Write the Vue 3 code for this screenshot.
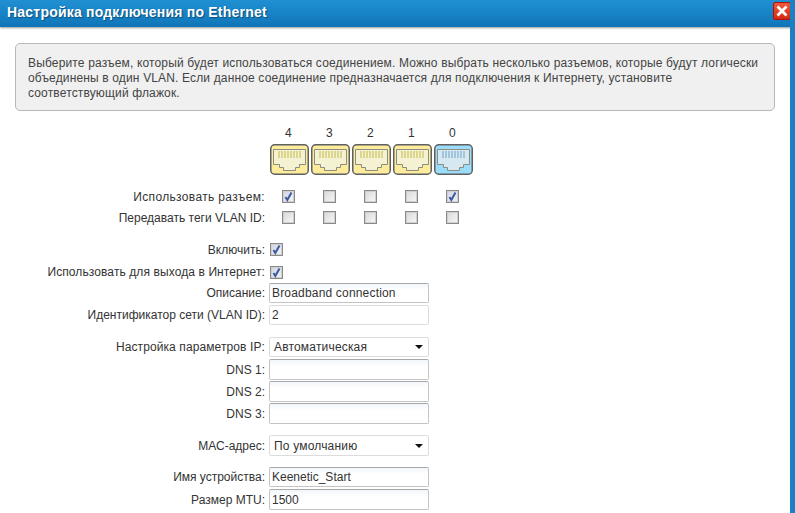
<script setup>
const ports = [
  { n: 4, blue: false, use: true },
  { n: 3, blue: false, use: false },
  { n: 2, blue: false, use: false },
  { n: 1, blue: false, use: false },
  { n: 0, blue: true, use: true },
]
const pins = [0, 1, 2, 3, 4, 5, 6, 7]
</script>

<template>
  <div class="window">
    <header class="title">
      <h1>Настройка подключения по Ethernet</h1>
      <button class="close" aria-label="Закрыть">
        <svg width="16" height="16" viewBox="0 0 16 16"><path d="M3.5 3.5l9 9M12.5 3.5l-9 9" stroke="#fff" stroke-width="2.8" fill="none" /></svg>
      </button>
    </header>
    <main class="body">
      <div class="info">
        Выберите разъем, который будет использоваться соединением. Можно выбрать несколько разъемов, которые будут логически объединены в один VLAN. Если данное соединение предназначается для подключения к Интернету, установите соответствующий флажок.
      </div>

      <div class="grid-row numbers">
        <span></span>
        <div class="cells"><span v-for="p in ports" :key="p.n" class="cell">{{ p.n }}</span></div>
      </div>
      <div class="grid-row jacks">
        <span></span>
        <div class="cells">
          <span v-for="p in ports" :key="p.n" class="cell">
            <svg width="39" height="31" viewBox="0 0 39 31">
              <rect x="0.75" y="0.75" width="37.5" height="29.5" rx="4" :fill="p.blue ? '#9bdcfb' : '#fdec9c'" stroke="#5f5f5f" stroke-width="1.5" />
              <path d="M3.5 5.5h32v15h-6v3h-4v3h-12v-3h-4v-3h-6z" :fill="p.blue ? '#d6e9f2' : '#f5f1d3'" stroke="#8c8c80" />
              <rect v-for="i in pins" :key="i" :x="8 + i * 3" y="7" width="2" height="7" :fill="p.blue ? '#a3c5dc' : '#dcd68c'" />
            </svg>
          </span>
        </div>
      </div>

      <div class="grid-row check-row first">
        <label class="wide">Использовать разъем:</label>
        <div class="cells">
          <span v-for="p in ports" :key="p.n" class="cell"><span class="box" :class="{ on: p.use }"><svg v-if="p.use" width="11" height="11" viewBox="0 0 11 11"><path d="M2.5 6l1.8 3L8.5 1.5" stroke="#3b5a9e" stroke-width="2" fill="none" /></svg></span></span>
        </div>
      </div>
      <div class="grid-row check-row">
        <label>Передавать теги VLAN ID:</label>
        <div class="cells">
          <span v-for="p in ports" :key="p.n" class="cell"><span class="box"></span></span>
        </div>
      </div>

      <div class="grid-row single enable">
        <label>Включить:</label>
        <span class="box on"><svg width="11" height="11" viewBox="0 0 11 11"><path d="M2.5 6l1.8 3L8.5 1.5" stroke="#3b5a9e" stroke-width="2" fill="none" /></svg></span>
      </div>
      <div class="grid-row single internet">
        <label class="semi">Использовать для выхода в Интернет:</label>
        <span class="box on"><svg width="11" height="11" viewBox="0 0 11 11"><path d="M2.5 6l1.8 3L8.5 1.5" stroke="#3b5a9e" stroke-width="2" fill="none" /></svg></span>
      </div>

      <div class="grid-row field desc"><label>Описание:</label><div class="input spaced">Broadband connection</div></div>
      <div class="grid-row field"><label>Идентификатор сети (VLAN ID):</label><div class="input plain">2</div></div>

      <div class="grid-row field ip"><label class="semi">Настройка параметров IP:</label><div class="input select spaced"><span>Автоматическая</span><i class="arrow"></i></div></div>
      <div class="grid-row field"><label>DNS 1:</label><div class="input tall"></div></div>
      <div class="grid-row field close-row"><label>DNS 2:</label><div class="input tall"></div></div>
      <div class="grid-row field close-row"><label>DNS 3:</label><div class="input tall"></div></div>

      <div class="grid-row field group"><label>МАС-адрес:</label><div class="input select tall spaced"><span>По умолчанию</span><i class="arrow"></i></div></div>

      <div class="grid-row field group"><label>Имя устройства:</label><div class="input">Keenetic_Start</div></div>
      <div class="grid-row field"><label>Размер MTU:</label><div class="input tall">1500</div></div>
    </main>
  </div>
</template>

<style scoped>
.window {
  width: 795px;
  height: 513px;
  overflow: hidden;
  box-sizing: border-box;
  background: #fff;
  border-right: 5px solid #1a80c2;
  font-family: "Liberation Sans", Arial, sans-serif;
  font-size: 12px;
  color: #333;
}
.title {
  height: 27px;
  box-sizing: content-box;
  margin-right: -5px;
  display: flex;
  align-items: flex-start;
  justify-content: space-between;
  padding: 0 0 0 7px;
  background: linear-gradient(#2090d2, #0f75b8);
  box-shadow: 0 1px 2px #999;
  position: relative;
}
h1 {
  margin: 3px 0 0;
  font-size: 14px;
  line-height: 18px;
  font-weight: bold;
  letter-spacing: 0.21px;
  color: #fff;
  text-shadow: 1px 1px 1px #0a4e7e;
}
.close {
  width: 18px;
  height: 18px;
  margin: 2px 4px 0 0;
  padding: 0;
  display: flex;
  align-items: center;
  justify-content: center;
  background: linear-gradient(#ee5a3c, #d42a10);
  border: 1px solid #b01010;
  border-radius: 2px;
}
.body { padding-top: 16px; }
.info {
  width: 760px;
  height: 68px;
  box-sizing: border-box;
  margin-left: 15px;
  padding: 12px 12px 0;
  background: #f0f0f0;
  border: 1px solid #b8b8b8;
  border-radius: 5px;
  line-height: 15px;
  letter-spacing: 0.15px;
  color: #444;
}
.grid-row {
  display: grid;
  grid-template-columns: 265px 1fr;
  column-gap: 4px;
  align-items: center;
}
label { text-align: right; color: #333; white-space: nowrap; }
label.wide { letter-spacing: 0.35px; }
label.semi { letter-spacing: 0.1px; }
.cells { display: flex; margin-left: 1px; }
.cell {
  width: 41px;
  flex: none;
  display: flex;
  justify-content: flex-start;
}
.numbers { margin-top: 15px; height: 13px; }
.numbers .cell { padding-left: 15px; box-sizing: border-box; }
.jacks { margin-top: 5px; height: 31px; }
.jacks svg { display: block; }
.check-row { height: 21px; }
.check-row .cell { padding-left: 12px; box-sizing: border-box; }
.check-row.first { margin-top: 11px; }
.box {
  width: 13px;
  height: 13px;
  box-sizing: border-box;
  display: flex;
  align-items: center;
  justify-content: center;
  border: 1px solid #8a8a8a;
  box-shadow: inset 0 0 0 1px #cfcfcf;
  background: linear-gradient(135deg, #d8d8d8, #f8f8f8);
}
.box.on { background: linear-gradient(135deg, #d0d3e4, #f4f4f8); }
.single { justify-items: start; }
.single label { justify-self: end; }
.single .box { margin-left: 1px; }
.enable { margin-top: 10px; height: 23px; }
.internet { height: 22px; }
.field { margin-top: 2px; }
.field.desc { margin-top: 0; }
.field.ip { margin-top: 12px; }
.field.close-row { margin-top: 1px; }
.field.group { margin-top: 11px; }
.input {
  width: 160px;
  height: 20px;
  box-sizing: border-box;
  padding-left: 2px;
  display: flex;
  align-items: center;
  justify-content: space-between;
  background: linear-gradient(#f2f6fa, #fff 35%);
  border: 1px solid #c4c4c4;
  border-top-color: #a8a8a8;
  border-radius: 2px;
  color: #333;
}
.input.spaced { letter-spacing: 0.18px; }
.input.plain { border-color: #dcdcdc; background: #fff; }
.input.tall { height: 21px; }
.select {
  padding: 0 5px 0 4px;
  background: #fff;
  border-color: #dcdcdc;
}
.arrow {
  width: 0;
  height: 0;
  border-left: 4px solid transparent;
  border-right: 4px solid transparent;
  border-top: 4px solid #111;
}
</style>

<style>
html, body { margin: 0; background: #fff; }
</style>
